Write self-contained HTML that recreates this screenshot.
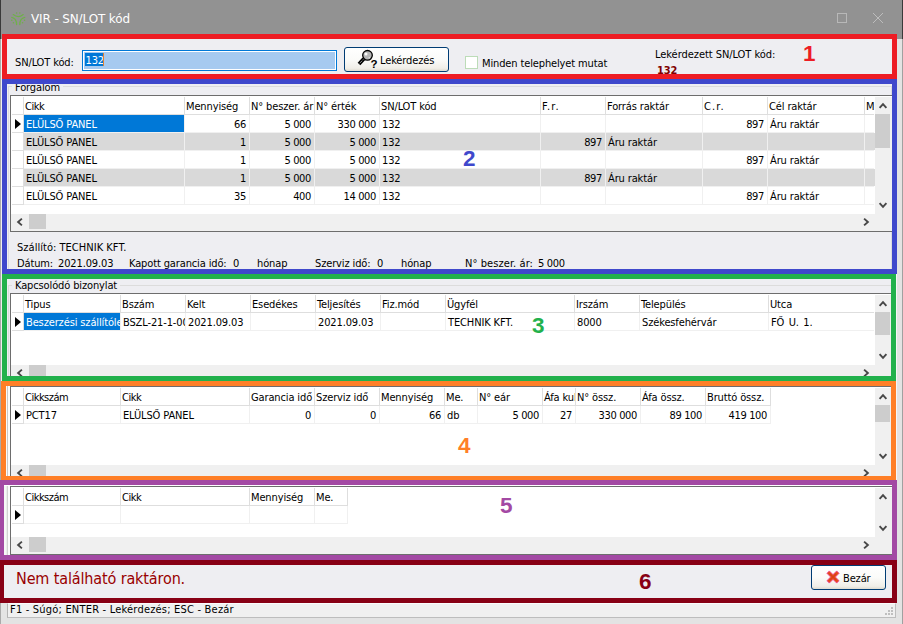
<!DOCTYPE html><html lang="hu"><head><meta charset="utf-8"><title>VIR - SN/LOT kód</title><style>
html,body{margin:0;padding:0}
body{width:903px;height:624px;background:#e3e3e3;position:relative;overflow:hidden;font-family:"DejaVu Sans Condensed","DejaVu Sans","Liberation Sans",sans-serif;font-size:11px;color:#000;letter-spacing:-0.13px}
div,span{position:absolute;box-sizing:border-box}
.t{white-space:nowrap;line-height:13px;height:13px}
.grid{background:#fff;overflow:hidden}
.c{position:absolute;overflow:hidden;white-space:nowrap;line-height:13px;padding-top:3px;height:17px}
.vl{background:#e7e7e7;width:1px}
.hl{background:#e7e7e7;height:1px}
.sb{background:#f0f0f0}
.th{background:#cdcdcd}
.btn{border:1px solid #003c74;border-radius:3px;background:linear-gradient(#ffffff 0%,#fbfbf9 50%,#f0eee8 88%,#dedbd0 100%)}
.num{font-family:"Liberation Sans",sans-serif;font-weight:bold;font-size:22.5px;line-height:22px;white-space:nowrap;letter-spacing:0}
.rect{border-style:solid;border-width:5px;background:transparent}
</style></head><body>
<div style="left:0px;top:0px;width:903px;height:39px;background:#929292"></div>
<div style="left:0px;top:0px;width:1px;height:39px;background:#3a3a3a"></div>
<div style="left:902px;top:0px;width:1px;height:39px;background:#3a3a3a"></div>
<div style="left:0px;top:39px;width:1px;height:585px;background:#aaaaaa"></div>
<div style="left:902px;top:39px;width:1px;height:585px;background:#a0a0a0"></div>
<div style="left:1px;top:39px;width:1px;height:564px;background:#eeeeee"></div>
<div style="left:1px;top:603px;width:6px;height:15px;background:#e4e4e4"></div>
<svg style="position:absolute;left:10.3px;top:11.4px" width="17" height="16" viewBox="0 0 17 16"><g fill="none" stroke="#6fb04a" stroke-width="1.3" stroke-linecap="round"><path d="M3.2 3.6 Q8.3 7.6 13.2 3.6"/><path d="M1.8 6.4 Q6.6 7.4 6.6 13.6"/><path d="M14.8 6.4 Q9.8 7.4 9.8 13.6"/></g><g fill="#6fb04a"><circle cx="6.6" cy="2" r=".8"/><circle cx="9.8" cy="2" r=".8"/><circle cx="1.8" cy="9.2" r=".8"/><circle cx="3.4" cy="11.8" r=".8"/><circle cx="14.6" cy="9.2" r=".8"/><circle cx="12.6" cy="11.8" r=".8"/></g></svg>
<span class="t" style="left:31px;top:11px;font-family:'DejaVu Sans','Liberation Sans',sans-serif;font-size:12px;line-height:16px;height:16px;color:#fff">VIR - SN/LOT kód</span>
<div style="left:837px;top:13px;width:10px;height:10px;border:1px solid #b8b8b8"></div>
<svg style="position:absolute;left:872px;top:12px" width="12" height="12" viewBox="0 0 12 12"><path d="M1 1 L11 11 M11 1 L1 11" stroke="#bdbdbd" stroke-width="1" fill="none"/></svg>
<div style="left:2px;top:39px;width:894px;height:564px;background:#eeeef2"></div>
<div style="left:896px;top:39px;width:1px;height:564px;background:#f6f6f6"></div>
<div style="left:2px;top:34px;width:895px;height:45px;background:#eeeef2"></div>
<span class="t" style="left:15px;top:56px;">SN/LOT kód:</span>
<div style="left:82px;top:50px;width:255px;height:21px;background:#a6caf0;border:1px solid #0078d7;box-shadow:inset 0 0 0 1px #fff"></div>
<div style="left:85px;top:53px;width:19px;height:13px;background:#0078d7"></div>
<span class="t" style="left:85.5px;top:54px;color:#fff">132</span>
<div style="left:103px;top:53px;width:1px;height:13px;background:#e08030"></div>
<div class="btn" style="left:344px;top:47px;width:105px;height:25px;"></div>
<svg style="position:absolute;left:356px;top:48px" width="24" height="22" viewBox="0 0 24 22"><path d="M7.9 10.8 L3.0 16.0" stroke="#000" stroke-width="3.7"/><path d="M7.2 11.5 L3.4 15.6" stroke="#e8e8e8" stroke-width="1" stroke-dasharray="1 1"/><circle cx="11.5" cy="7.3" r="4.8" fill="#b6b6b6" stroke="#000" stroke-width="1.3"/><circle cx="10" cy="6" r="1.5" fill="#fafafa"/><circle cx="13.3" cy="9.7" r=".7" fill="#e6e6e6"/></svg>
<span class="t" style="left:370.5px;top:58px;font-family:'Liberation Sans',sans-serif;font-weight:bold;font-size:11.5px;letter-spacing:0">?</span>
<span class="t" style="left:380px;top:54px;">Lekérdezés</span>
<div style="left:465px;top:56px;width:13px;height:13px;background:#fff;border:1px solid #bcdcb8"></div>
<span class="t" style="left:482px;top:57px;">Minden telephelyet mutat</span>
<span class="t" style="left:655px;top:48px;letter-spacing:-0.05px">Lekérdezett SN/LOT kód:</span>
<span class="t" style="left:657px;top:64px;font-weight:bold;color:#800000">132</span>
<span class="num" style="left:803px;top:43px;color:#ed1c24">1</span>
<div style="left:8px;top:86px;width:884px;height:184px;border:1px solid #dcdcdc;border-radius:0;box-shadow:1px 1px 0 #fff"></div>
<span class="t" style="left:12px;top:81px;background:#eeeef2">&nbsp;Forgalom&nbsp;</span>
<div class="grid" style="left:10px;top:95px;width:884px;height:137px;border:1px solid #6d6d6d"><div style="left:13px;top:37px;width:851px;height:17px;background:#d9d9d9"></div><div style="left:13px;top:73px;width:851px;height:17px;background:#d9d9d9"></div><div class="hl" style="left:1px;top:18px;width:862px;background:#dedede"></div><div class="hl" style="left:1px;top:36px;width:11px;background:#dedede"></div><div class="hl" style="left:13px;top:36px;width:850px;background:#f0f0f0"></div><div class="hl" style="left:1px;top:54px;width:11px;background:#dedede"></div><div class="hl" style="left:13px;top:54px;width:850px;background:#f0f0f0"></div><div class="hl" style="left:1px;top:72px;width:11px;background:#dedede"></div><div class="hl" style="left:13px;top:72px;width:850px;background:#f0f0f0"></div><div class="hl" style="left:1px;top:90px;width:11px;background:#dedede"></div><div class="hl" style="left:13px;top:90px;width:850px;background:#f0f0f0"></div><div class="hl" style="left:1px;top:108px;width:11px;background:#dedede"></div><div class="hl" style="left:13px;top:108px;width:850px;background:#f0f0f0"></div><div class="vl" style="left:12px;top:1px;height:108px;background:#dedede"></div><div class="vl" style="left:173px;top:1px;height:18px;background:#dedede"></div><div class="vl" style="left:173px;top:19px;height:90px;background:#f0f0f0"></div><div class="vl" style="left:238px;top:1px;height:18px;background:#dedede"></div><div class="vl" style="left:238px;top:19px;height:90px;background:#f0f0f0"></div><div class="vl" style="left:303px;top:1px;height:18px;background:#dedede"></div><div class="vl" style="left:303px;top:19px;height:90px;background:#f0f0f0"></div><div class="vl" style="left:368px;top:1px;height:18px;background:#dedede"></div><div class="vl" style="left:368px;top:19px;height:90px;background:#f0f0f0"></div><div class="vl" style="left:529px;top:1px;height:18px;background:#dedede"></div><div class="vl" style="left:529px;top:19px;height:90px;background:#f0f0f0"></div><div class="vl" style="left:594px;top:1px;height:18px;background:#dedede"></div><div class="vl" style="left:594px;top:19px;height:90px;background:#f0f0f0"></div><div class="vl" style="left:691px;top:1px;height:18px;background:#dedede"></div><div class="vl" style="left:691px;top:19px;height:90px;background:#f0f0f0"></div><div class="vl" style="left:756px;top:1px;height:18px;background:#dedede"></div><div class="vl" style="left:756px;top:19px;height:90px;background:#f0f0f0"></div><div class="vl" style="left:853px;top:1px;height:18px;background:#dedede"></div><div class="vl" style="left:853px;top:19px;height:90px;background:#f0f0f0"></div><div class="c" style="left:13px;top:1px;width:160px;padding-left:1px;letter-spacing:-0.5px;">Cikk</div><div class="c" style="left:174px;top:1px;width:64px;padding-left:1px;">Mennyiség</div><div class="c" style="left:239px;top:1px;width:64px;padding-left:1px;">N° beszer. ár</div><div class="c" style="left:304px;top:1px;width:64px;padding-left:1px;">N° érték</div><div class="c" style="left:369px;top:1px;width:160px;padding-left:1px;">SN/LOT kód</div><div class="c" style="left:530px;top:1px;width:64px;padding-left:1px;letter-spacing:1.1px;">F.r.</div><div class="c" style="left:595px;top:1px;width:96px;padding-left:1px;">Forrás raktár</div><div class="c" style="left:692px;top:1px;width:64px;padding-left:1px;letter-spacing:1.1px;">C.r.</div><div class="c" style="left:757px;top:1px;width:96px;padding-left:1px;">Cél raktár</div><div class="c" style="left:854px;top:1px;width:10px;padding-left:1px;">M</div><div class="c" style="left:13px;top:19px;width:160px;background:#0078d7;color:#fff;padding-left:2px;">ELÜLSŐ PANEL</div><div class="c" style="left:174px;top:19px;width:64px;text-align:right;padding-right:3px;letter-spacing:-0.35px;">66</div><div class="c" style="left:239px;top:19px;width:64px;text-align:right;padding-right:3px;letter-spacing:-0.35px;">5 000</div><div class="c" style="left:304px;top:19px;width:64px;text-align:right;padding-right:3px;letter-spacing:-0.35px;">330 000</div><div class="c" style="left:369px;top:19px;width:160px;padding-left:2px;">132</div><div class="c" style="left:692px;top:19px;width:64px;text-align:right;padding-right:3px;letter-spacing:-0.35px;">897</div><div class="c" style="left:757px;top:19px;width:96px;padding-left:2px;">Áru raktár</div><div class="c" style="left:13px;top:37px;width:160px;padding-left:2px;">ELÜLSŐ PANEL</div><div class="c" style="left:174px;top:37px;width:64px;text-align:right;padding-right:3px;letter-spacing:-0.35px;">1</div><div class="c" style="left:239px;top:37px;width:64px;text-align:right;padding-right:3px;letter-spacing:-0.35px;">5 000</div><div class="c" style="left:304px;top:37px;width:64px;text-align:right;padding-right:3px;letter-spacing:-0.35px;">5 000</div><div class="c" style="left:369px;top:37px;width:160px;padding-left:2px;">132</div><div class="c" style="left:530px;top:37px;width:64px;text-align:right;padding-right:3px;letter-spacing:-0.35px;">897</div><div class="c" style="left:595px;top:37px;width:96px;padding-left:2px;">Áru raktár</div><div class="c" style="left:13px;top:55px;width:160px;padding-left:2px;">ELÜLSŐ PANEL</div><div class="c" style="left:174px;top:55px;width:64px;text-align:right;padding-right:3px;letter-spacing:-0.35px;">1</div><div class="c" style="left:239px;top:55px;width:64px;text-align:right;padding-right:3px;letter-spacing:-0.35px;">5 000</div><div class="c" style="left:304px;top:55px;width:64px;text-align:right;padding-right:3px;letter-spacing:-0.35px;">5 000</div><div class="c" style="left:369px;top:55px;width:160px;padding-left:2px;">132</div><div class="c" style="left:692px;top:55px;width:64px;text-align:right;padding-right:3px;letter-spacing:-0.35px;">897</div><div class="c" style="left:757px;top:55px;width:96px;padding-left:2px;">Áru raktár</div><div class="c" style="left:13px;top:73px;width:160px;padding-left:2px;">ELÜLSŐ PANEL</div><div class="c" style="left:174px;top:73px;width:64px;text-align:right;padding-right:3px;letter-spacing:-0.35px;">1</div><div class="c" style="left:239px;top:73px;width:64px;text-align:right;padding-right:3px;letter-spacing:-0.35px;">5 000</div><div class="c" style="left:304px;top:73px;width:64px;text-align:right;padding-right:3px;letter-spacing:-0.35px;">5 000</div><div class="c" style="left:369px;top:73px;width:160px;padding-left:2px;">132</div><div class="c" style="left:530px;top:73px;width:64px;text-align:right;padding-right:3px;letter-spacing:-0.35px;">897</div><div class="c" style="left:595px;top:73px;width:96px;padding-left:2px;">Áru raktár</div><div class="c" style="left:13px;top:91px;width:160px;padding-left:2px;">ELÜLSŐ PANEL</div><div class="c" style="left:174px;top:91px;width:64px;text-align:right;padding-right:3px;letter-spacing:-0.35px;">35</div><div class="c" style="left:239px;top:91px;width:64px;text-align:right;padding-right:3px;letter-spacing:-0.35px;">400</div><div class="c" style="left:304px;top:91px;width:64px;text-align:right;padding-right:3px;letter-spacing:-0.35px;">14 000</div><div class="c" style="left:369px;top:91px;width:160px;padding-left:2px;">132</div><div class="c" style="left:692px;top:91px;width:64px;text-align:right;padding-right:3px;letter-spacing:-0.35px;">897</div><div class="c" style="left:757px;top:91px;width:96px;padding-left:2px;">Áru raktár</div><svg style="position:absolute;left:4px;top:23px" width="6" height="10" viewBox="0 0 6 10"><path d="M0 0 L6 5 L0 10 Z" fill="#000"/></svg><div class="sb" style="left:864px;top:1px;width:18px;height:137px"></div><div class="sb" style="left:0;top:118px;width:884px;height:17px"></div><div class="th" style="left:18px;top:118px;width:17px;height:15px"></div><svg style="position:absolute;left:5px;top:120.5px" width="8" height="10" viewBox="0 0 8 10"><path d="M5.9 1.6 L2.1 5 L5.9 8.4" stroke="#474747" stroke-width="1.9" fill="none"/></svg><svg style="position:absolute;left:851px;top:120.5px" width="8" height="10" viewBox="0 0 8 10"><path d="M2.1 1.6 L5.9 5 L2.1 8.4" stroke="#474747" stroke-width="1.9" fill="none"/></svg><svg style="position:absolute;left:866.5px;top:6px" width="10" height="8" viewBox="0 0 10 8"><path d="M1.6 5.9 L5 2.1 L8.4 5.9" stroke="#474747" stroke-width="1.9" fill="none"/></svg><svg style="position:absolute;left:866.5px;top:105px" width="10" height="8" viewBox="0 0 10 8"><path d="M1.6 2.1 L5 5.9 L8.4 2.1" stroke="#474747" stroke-width="1.9" fill="none"/></svg><div class="th" style="left:864px;top:18px;width:15px;height:34px"></div></div>
<span class="t" style="left:17px;top:241px;letter-spacing:0.03px">Szállító: TECHNIK KFT.</span>
<span class="t" style="left:17px;top:257px;">Dátum:</span>
<span class="t" style="left:58px;top:257px;">2021.09.03</span>
<span class="t" style="left:129px;top:257px;">Kapott garancia idő:</span>
<span class="t" style="left:233px;top:257px;">0</span>
<span class="t" style="left:257px;top:257px;">hónap</span>
<span class="t" style="left:315px;top:257px;">Szerviz idő:</span>
<span class="t" style="left:377px;top:257px;">0</span>
<span class="t" style="left:401px;top:257px;">hónap</span>
<span class="t" style="left:465px;top:257px;letter-spacing:0.08px">N° beszer. ár:</span>
<span class="t" style="left:538px;top:257px;letter-spacing:-0.35px">5 000</span>
<span class="num" style="left:463px;top:148px;color:#3f48cc">2</span>
<div style="left:8px;top:285px;width:884px;height:96px;border:1px solid #dcdcdc;box-shadow:1px 1px 0 #fff"></div>
<span class="t" style="left:12px;top:279px;background:#eeeef2">&nbsp;Kapcsolódó bizonylat&nbsp;</span>
<div class="grid" style="left:10px;top:293px;width:884px;height:92px;border:1px solid #6d6d6d"><div class="hl" style="left:1px;top:18px;width:862px;background:#dedede"></div><div class="hl" style="left:1px;top:36px;width:11px;background:#dedede"></div><div class="hl" style="left:13px;top:36px;width:850px;background:#f0f0f0"></div><div class="vl" style="left:12px;top:1px;height:36px;background:#dedede"></div><div class="vl" style="left:109px;top:1px;height:18px;background:#dedede"></div><div class="vl" style="left:109px;top:19px;height:18px;background:#f0f0f0"></div><div class="vl" style="left:174px;top:1px;height:18px;background:#dedede"></div><div class="vl" style="left:174px;top:19px;height:18px;background:#f0f0f0"></div><div class="vl" style="left:239px;top:1px;height:18px;background:#dedede"></div><div class="vl" style="left:239px;top:19px;height:18px;background:#f0f0f0"></div><div class="vl" style="left:304px;top:1px;height:18px;background:#dedede"></div><div class="vl" style="left:304px;top:19px;height:18px;background:#f0f0f0"></div><div class="vl" style="left:369px;top:1px;height:18px;background:#dedede"></div><div class="vl" style="left:369px;top:19px;height:18px;background:#f0f0f0"></div><div class="vl" style="left:434px;top:1px;height:18px;background:#dedede"></div><div class="vl" style="left:434px;top:19px;height:18px;background:#f0f0f0"></div><div class="vl" style="left:563px;top:1px;height:18px;background:#dedede"></div><div class="vl" style="left:563px;top:19px;height:18px;background:#f0f0f0"></div><div class="vl" style="left:628px;top:1px;height:18px;background:#dedede"></div><div class="vl" style="left:628px;top:19px;height:18px;background:#f0f0f0"></div><div class="vl" style="left:757px;top:1px;height:18px;background:#dedede"></div><div class="vl" style="left:757px;top:19px;height:18px;background:#f0f0f0"></div><div class="c" style="left:13px;top:1px;width:96px;padding-left:1px;">Tipus</div><div class="c" style="left:110px;top:1px;width:64px;padding-left:1px;">Bszám</div><div class="c" style="left:175px;top:1px;width:64px;padding-left:1px;">Kelt</div><div class="c" style="left:240px;top:1px;width:64px;padding-left:1px;">Esedékes</div><div class="c" style="left:305px;top:1px;width:64px;padding-left:1px;">Teljesítés</div><div class="c" style="left:370px;top:1px;width:64px;padding-left:1px;">Fiz.mód</div><div class="c" style="left:435px;top:1px;width:128px;padding-left:1px;">Ügyfél</div><div class="c" style="left:564px;top:1px;width:64px;padding-left:1px;">Irszám</div><div class="c" style="left:629px;top:1px;width:128px;padding-left:1px;">Település</div><div class="c" style="left:758px;top:1px;width:106px;padding-left:1px;">Utca</div><div class="c" style="left:13px;top:19px;width:96px;background:#0078d7;color:#fff;padding-left:2px;">Beszerzési szállítólevél</div><div class="c" style="left:110px;top:19px;width:64px;padding-left:2px;">BSZL-21-1-00001</div><div class="c" style="left:175px;top:19px;width:64px;padding-left:2px;">2021.09.03</div><div class="c" style="left:305px;top:19px;width:64px;padding-left:2px;">2021.09.03</div><div class="c" style="left:435px;top:19px;width:128px;padding-left:2px;">TECHNIK KFT.</div><div class="c" style="left:564px;top:19px;width:64px;padding-left:2px;">8000</div><div class="c" style="left:629px;top:19px;width:128px;padding-left:2px;">Székesfehérvár</div><div class="c" style="left:758px;top:19px;width:106px;padding-left:2px;word-spacing:1.5px;">FŐ U. 1.</div><svg style="position:absolute;left:4px;top:23px" width="6" height="10" viewBox="0 0 6 10"><path d="M0 0 L6 5 L0 10 Z" fill="#000"/></svg><div class="sb" style="left:864px;top:1px;width:18px;height:92px"></div><div class="sb" style="left:0;top:71px;width:884px;height:17px"></div><div class="th" style="left:18px;top:71px;width:17px;height:15px"></div><svg style="position:absolute;left:5px;top:73.5px" width="8" height="10" viewBox="0 0 8 10"><path d="M5.9 1.6 L2.1 5 L5.9 8.4" stroke="#474747" stroke-width="1.9" fill="none"/></svg><svg style="position:absolute;left:851px;top:73.5px" width="8" height="10" viewBox="0 0 8 10"><path d="M2.1 1.6 L5.9 5 L2.1 8.4" stroke="#474747" stroke-width="1.9" fill="none"/></svg><svg style="position:absolute;left:866.5px;top:6px" width="10" height="8" viewBox="0 0 10 8"><path d="M1.6 5.9 L5 2.1 L8.4 5.9" stroke="#474747" stroke-width="1.9" fill="none"/></svg><svg style="position:absolute;left:866.5px;top:58px" width="10" height="8" viewBox="0 0 10 8"><path d="M1.6 2.1 L5 5.9 L8.4 2.1" stroke="#474747" stroke-width="1.9" fill="none"/></svg><div class="th" style="left:864px;top:18px;width:15px;height:23px"></div></div>
<span class="num" style="left:532px;top:315px;color:#22b14c">3</span>
<div style="left:6px;top:386px;width:4px;height:95px;background:linear-gradient(90deg,#fafafa 0,#fafafa 1.5px,#c9c9c9 1.5px,#c9c9c9 2.5px,#fbfbfb 2.5px)"></div>
<div class="grid" style="left:10px;top:386px;width:884px;height:96px;border:1px solid #6d6d6d"><div class="hl" style="left:1px;top:18px;width:759px;background:#dedede"></div><div class="hl" style="left:1px;top:36px;width:11px;background:#dedede"></div><div class="hl" style="left:13px;top:36px;width:747px;background:#f0f0f0"></div><div class="vl" style="left:12px;top:1px;height:36px;background:#dedede"></div><div class="vl" style="left:109px;top:1px;height:18px;background:#dedede"></div><div class="vl" style="left:109px;top:19px;height:18px;background:#f0f0f0"></div><div class="vl" style="left:238px;top:1px;height:18px;background:#dedede"></div><div class="vl" style="left:238px;top:19px;height:18px;background:#f0f0f0"></div><div class="vl" style="left:303px;top:1px;height:18px;background:#dedede"></div><div class="vl" style="left:303px;top:19px;height:18px;background:#f0f0f0"></div><div class="vl" style="left:368px;top:1px;height:18px;background:#dedede"></div><div class="vl" style="left:368px;top:19px;height:18px;background:#f0f0f0"></div><div class="vl" style="left:433px;top:1px;height:18px;background:#dedede"></div><div class="vl" style="left:433px;top:19px;height:18px;background:#f0f0f0"></div><div class="vl" style="left:466px;top:1px;height:18px;background:#dedede"></div><div class="vl" style="left:466px;top:19px;height:18px;background:#f0f0f0"></div><div class="vl" style="left:531px;top:1px;height:18px;background:#dedede"></div><div class="vl" style="left:531px;top:19px;height:18px;background:#f0f0f0"></div><div class="vl" style="left:564px;top:1px;height:18px;background:#dedede"></div><div class="vl" style="left:564px;top:19px;height:18px;background:#f0f0f0"></div><div class="vl" style="left:629px;top:1px;height:18px;background:#dedede"></div><div class="vl" style="left:629px;top:19px;height:18px;background:#f0f0f0"></div><div class="vl" style="left:694px;top:1px;height:18px;background:#dedede"></div><div class="vl" style="left:694px;top:19px;height:18px;background:#f0f0f0"></div><div class="vl" style="left:759px;top:1px;height:18px;background:#dedede"></div><div class="vl" style="left:759px;top:19px;height:18px;background:#f0f0f0"></div><div class="c" style="left:13px;top:1px;width:96px;padding-left:1px;letter-spacing:-0.5px;">Cikkszám</div><div class="c" style="left:110px;top:1px;width:128px;padding-left:1px;letter-spacing:-0.5px;">Cikk</div><div class="c" style="left:239px;top:1px;width:64px;padding-left:1px;">Garancia idő</div><div class="c" style="left:304px;top:1px;width:64px;padding-left:1px;">Szerviz idő</div><div class="c" style="left:369px;top:1px;width:64px;padding-left:1px;">Mennyiség</div><div class="c" style="left:434px;top:1px;width:32px;padding-left:1px;">Me.</div><div class="c" style="left:467px;top:1px;width:64px;padding-left:1px;">N° eár</div><div class="c" style="left:532px;top:1px;width:32px;padding-left:1px;">Áfa kulcs</div><div class="c" style="left:565px;top:1px;width:64px;padding-left:1px;">N° össz.</div><div class="c" style="left:630px;top:1px;width:64px;padding-left:1px;">Áfa össz.</div><div class="c" style="left:695px;top:1px;width:64px;padding-left:1px;">Bruttó össz.</div><div class="c" style="left:13px;top:19px;width:96px;padding-left:2px;">PCT17</div><div class="c" style="left:110px;top:19px;width:128px;padding-left:2px;">ELÜLSŐ PANEL</div><div class="c" style="left:239px;top:19px;width:64px;text-align:right;padding-right:3px;letter-spacing:-0.35px;">0</div><div class="c" style="left:304px;top:19px;width:64px;text-align:right;padding-right:3px;letter-spacing:-0.35px;">0</div><div class="c" style="left:369px;top:19px;width:64px;text-align:right;padding-right:3px;letter-spacing:-0.35px;">66</div><div class="c" style="left:434px;top:19px;width:32px;padding-left:2px;">db</div><div class="c" style="left:467px;top:19px;width:64px;text-align:right;padding-right:3px;letter-spacing:-0.35px;">5 000</div><div class="c" style="left:532px;top:19px;width:32px;text-align:right;padding-right:3px;letter-spacing:-0.35px;">27</div><div class="c" style="left:565px;top:19px;width:64px;text-align:right;padding-right:3px;letter-spacing:-0.35px;">330 000</div><div class="c" style="left:630px;top:19px;width:64px;text-align:right;padding-right:3px;letter-spacing:-0.35px;">89 100</div><div class="c" style="left:695px;top:19px;width:64px;text-align:right;padding-right:3px;letter-spacing:-0.35px;">419 100</div><svg style="position:absolute;left:4px;top:23px" width="6" height="10" viewBox="0 0 6 10"><path d="M0 0 L6 5 L0 10 Z" fill="#000"/></svg><div class="sb" style="left:864px;top:1px;width:18px;height:96px"></div><div class="sb" style="left:0;top:78px;width:884px;height:17px"></div><div class="th" style="left:18px;top:78px;width:17px;height:15px"></div><svg style="position:absolute;left:5px;top:80.5px" width="8" height="10" viewBox="0 0 8 10"><path d="M5.9 1.6 L2.1 5 L5.9 8.4" stroke="#474747" stroke-width="1.9" fill="none"/></svg><svg style="position:absolute;left:851px;top:80.5px" width="8" height="10" viewBox="0 0 8 10"><path d="M2.1 1.6 L5.9 5 L2.1 8.4" stroke="#474747" stroke-width="1.9" fill="none"/></svg><svg style="position:absolute;left:866.5px;top:6px" width="10" height="8" viewBox="0 0 10 8"><path d="M1.6 5.9 L5 2.1 L8.4 5.9" stroke="#474747" stroke-width="1.9" fill="none"/></svg><svg style="position:absolute;left:866.5px;top:65px" width="10" height="8" viewBox="0 0 10 8"><path d="M1.6 2.1 L5 5.9 L8.4 2.1" stroke="#474747" stroke-width="1.9" fill="none"/></svg><div class="th" style="left:864px;top:18px;width:15px;height:17px"></div></div>
<span class="num" style="left:458px;top:435px;color:#ff7f27">4</span>
<div style="left:4px;top:485px;width:6px;height:70px;background:linear-gradient(90deg,#f6f8f6 0,#f6f8f6 2px,#ececec 2px,#ececec 3px,#d2d2d2 3px,#d2d2d2 4px,#fbfbfb 4px)"></div>
<div style="left:4px;top:485px;width:888px;height:1px;background:#fff"></div>
<div class="grid" style="left:10px;top:486px;width:884px;height:69px;border:1px solid #6d6d6d"><div class="hl" style="left:1px;top:18px;width:336px;background:#dedede"></div><div class="hl" style="left:1px;top:36px;width:11px;background:#dedede"></div><div class="hl" style="left:13px;top:36px;width:324px;background:#f0f0f0"></div><div class="vl" style="left:12px;top:1px;height:36px;background:#dedede"></div><div class="vl" style="left:109px;top:1px;height:18px;background:#dedede"></div><div class="vl" style="left:109px;top:19px;height:18px;background:#f0f0f0"></div><div class="vl" style="left:238px;top:1px;height:18px;background:#dedede"></div><div class="vl" style="left:238px;top:19px;height:18px;background:#f0f0f0"></div><div class="vl" style="left:303px;top:1px;height:18px;background:#dedede"></div><div class="vl" style="left:303px;top:19px;height:18px;background:#f0f0f0"></div><div class="vl" style="left:336px;top:1px;height:18px;background:#dedede"></div><div class="vl" style="left:336px;top:19px;height:18px;background:#f0f0f0"></div><div class="c" style="left:13px;top:1px;width:96px;padding-left:1px;letter-spacing:-0.5px;">Cikkszám</div><div class="c" style="left:110px;top:1px;width:128px;padding-left:1px;letter-spacing:-0.5px;">Cikk</div><div class="c" style="left:239px;top:1px;width:64px;padding-left:1px;">Mennyiség</div><div class="c" style="left:304px;top:1px;width:32px;padding-left:1px;">Me.</div><svg style="position:absolute;left:4px;top:23px" width="6" height="10" viewBox="0 0 6 10"><path d="M0 0 L6 5 L0 10 Z" fill="#000"/></svg><div class="sb" style="left:864px;top:1px;width:18px;height:69px"></div><div class="sb" style="left:0;top:50px;width:884px;height:17px"></div><div class="th" style="left:18px;top:50px;width:17px;height:15px"></div><svg style="position:absolute;left:5px;top:52.5px" width="8" height="10" viewBox="0 0 8 10"><path d="M5.9 1.6 L2.1 5 L5.9 8.4" stroke="#474747" stroke-width="1.9" fill="none"/></svg><svg style="position:absolute;left:851px;top:52.5px" width="8" height="10" viewBox="0 0 8 10"><path d="M2.1 1.6 L5.9 5 L2.1 8.4" stroke="#474747" stroke-width="1.9" fill="none"/></svg><svg style="position:absolute;left:866.5px;top:6px" width="10" height="8" viewBox="0 0 10 8"><path d="M1.6 5.9 L5 2.1 L8.4 5.9" stroke="#474747" stroke-width="1.9" fill="none"/></svg><svg style="position:absolute;left:866.5px;top:37px" width="10" height="8" viewBox="0 0 10 8"><path d="M1.6 2.1 L5 5.9 L8.4 2.1" stroke="#474747" stroke-width="1.9" fill="none"/></svg></div>
<span class="num" style="left:500px;top:495px;color:#a349a4">5</span>
<div style="left:0px;top:560px;width:897px;height:43px;background:#eeeef2"></div>
<span class="t" style="left:16px;top:568.5px;font-size:16px;line-height:20px;height:20px;color:#990000">Nem található raktáron.</span>
<div class="btn" style="left:811px;top:565px;width:75px;height:25px;"></div>
<svg style="position:absolute;left:826px;top:570px" width="14" height="14" viewBox="0 0 14 14"><path d="M3.3 0.9 L7 4.6 L10.7 0.9 L13.1 3.3 L9.4 7 L13.1 10.7 L10.7 13.1 L7 9.4 L3.3 13.1 L0.9 10.7 L4.6 7 L0.9 3.3 Z" fill="#e64e1b" stroke="#f23fa0" stroke-width=".8"/><path d="M3.6 3.6 L10.4 10.4 M10.4 3.6 L3.6 10.4" stroke="#d8401a" stroke-width="1.2"/></svg>
<span class="t" style="left:843px;top:572px;">Bezár</span>
<span class="num" style="left:639px;top:571px;color:#880015">6</span>
<div style="left:7px;top:603px;width:889px;height:15px;background:#f0f0f0;border-top:1px solid #fbfbfb;border-left:1px solid #b4b4b4;border-bottom:1px solid #bdbdbd;border-right:1px solid #bdbdbd"></div>
<span class="t" style="left:10px;top:603px;letter-spacing:0.2px">F1 - Súgó; ENTER - Lekérdezés; ESC - Bezár</span>
<div style="left:891px;top:607px;width:2px;height:2px;background:#bfbfbf"></div>
<div style="left:888px;top:610px;width:2px;height:2px;background:#bfbfbf"></div>
<div style="left:891px;top:610px;width:2px;height:2px;background:#bfbfbf"></div>
<div style="left:885px;top:613px;width:2px;height:2px;background:#bfbfbf"></div>
<div style="left:888px;top:613px;width:2px;height:2px;background:#bfbfbf"></div>
<div style="left:891px;top:613px;width:2px;height:2px;background:#bfbfbf"></div>
<div class="rect" style="left:2px;top:34px;width:895px;height:45px;border-color:#ed1c24"></div>
<div class="rect" style="left:2px;top:79px;width:895px;height:195px;border-color:#3f48cc"></div>
<div class="rect" style="left:2px;top:274px;width:894px;height:107px;border-color:#22b14c"></div>
<div class="rect" style="left:1px;top:381px;width:895px;height:100px;border-color:#ff7f27"></div>
<div class="rect" style="left:-1px;top:480px;width:898px;height:80px;border-color:#a349a4"></div>
<div class="rect" style="left:-1px;top:560px;width:898px;height:43px;border-color:#880015"></div>
</body></html>
